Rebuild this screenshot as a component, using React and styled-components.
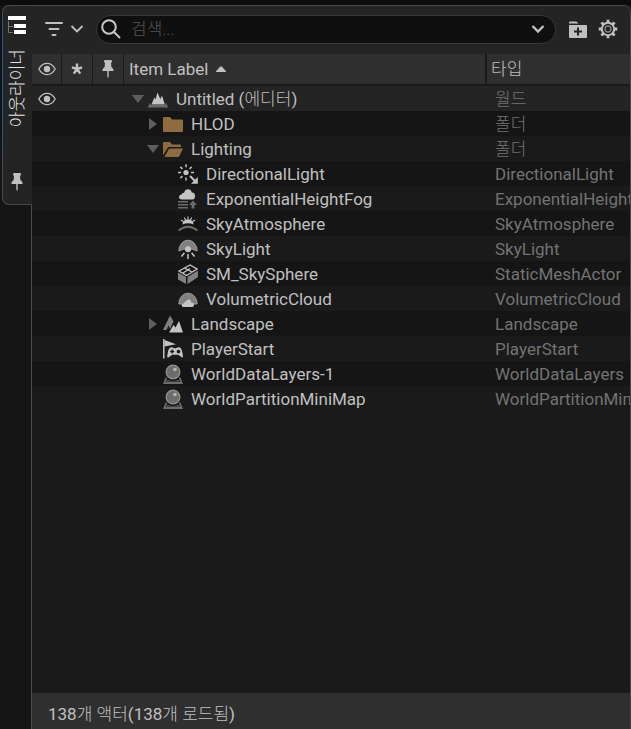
import React, { useState } from "react";
import styled, { createGlobalStyle } from "styled-components";

const GlobalStyle = createGlobalStyle`
  * { box-sizing: border-box; }
  body {
    margin: 0;
    background: #141414;
    color: #c0c0c0;
    font-family: Roboto, "Noto Sans CJK KR", sans-serif;
    font-size: 17px;
    line-height: 24px;
  }
  button, input {
    font: inherit;
    color: inherit;
    border: 0;
    padding: 0;
    margin: 0;
    background: none;
  }
  svg { display: block; flex: none; }
`;

const Page = styled.div`
  display: flex;
  min-height: 100vh;
  padding-top: 5px;
  background: linear-gradient(#0c0c0c, #0c0c0c) top / 100% 5px no-repeat #141414;
`;

const Sidebar = styled.nav`
  flex: none;
  display: flex;
  flex-direction: column;
  width: 32px;
  padding-left: 2px;
`;

const SidebarRest = styled.div`
  flex: 1;
  border-right: 1px solid #4c4c4c;
`;

const Tab = styled.button`
  display: flex;
  flex-direction: column;
  align-items: center;
  width: 100%;
  height: 200px;
  padding: 10px 2px 12px 0;
  border: 1px solid transparent;
  border-right: 0;
  border-radius: 7px 0 0 7px;
  background:
    linear-gradient(#242424, #242424) padding-box,
    linear-gradient(#484848, #1d5d96 12%, #1f5f96 50%, #484848 90%) border-box;
  color: #e4e4e4;
`;

const TabLabel = styled.span`
  writing-mode: vertical-rl;
  text-orientation: sideways;
  transform: rotate(180deg);
  margin-top: 14px;
  margin-bottom: auto;
  font-weight: 300;
`;

const Panel = styled.main`
  flex: 1;
  min-width: 0;
  display: flex;
  flex-direction: column;
  background: #1a1a1a;
  border: 1px solid #484848;
  border-bottom: 0;
  border-left: 0;
  border-top-right-radius: 7px;
  overflow: hidden;
`;

const Toolbar = styled.div`
  display: flex;
  align-items: center;
  height: 48px;
  padding: 0 12px 2px 13px;
  background: #242424;
`;

const IconButton = styled.button`
  display: flex;
  align-items: center;
  gap: 7px;
  margin-left: ${(p) => p.$gap || 0}px;
`;

const SearchBox = styled.label`
  flex: 1;
  min-width: 0;
  display: flex;
  align-items: center;
  gap: 10px;
  height: 29px;
  margin: 0 13px 0 12px;
  padding: 0 10px 0 4px;
  background: #0f0f0f;
  border: 1px solid #383838;
  border-radius: 15px;
`;

const SearchInput = styled.input`
  flex: 1;
  min-width: 0;
  outline: 0;
  font-weight: 300;
  &::placeholder { color: #565656; opacity: 1; }
`;

const Body = styled.section`
  flex: 1;
`;

const Table = styled.table`
  width: 100%;
  table-layout: fixed;
  border-collapse: separate;
  border-spacing: 0;
`;

const Col = styled.col`
  width: ${(p) => p.$width}px;
`;

const HeadRow = styled.tr`
  height: 32px;
`;

const HeadCell = styled.th`
  height: 32px;
  padding: 0 0 0 ${(p) => p.$pad || 0}px;
  background: #2f2f2f;
  border-right: ${(p) => p.$line || 0}px solid #1a1a1a;
  border-bottom: 2px solid #1a1a1a;
  text-align: left;
  font-weight: 400;
`;

const HeadContent = styled.div`
  display: flex;
  align-items: center;
  gap: 8px;
  justify-content: ${(p) => (p.$center ? "center" : "flex-start")};
`;

const Row = styled.tr`
  height: 25px;
  background: ${(p) => (p.$root ? "#242424" : "#1a1a1a")};
  &:nth-child(even) { background: #151515; }
`;

const Cell = styled.td`
  height: 25px;
  padding: 0;
  white-space: nowrap;
  overflow: hidden;
`;

const TypeCell = styled(Cell)`
  padding-left: 8px;
  color: #737373;
`;

const Item = styled.div`
  display: flex;
  align-items: center;
  padding-left: ${(p) => 6 + p.$level * 15}px;
`;

const Toggle = styled.button`
  display: flex;
  align-items: center;
  justify-content: center;
  width: 16px;
  height: 24px;
  margin-right: 2px;
  color: #5e5e5e;
`;

const ToggleSpace = styled.span`
  width: 18px;
`;

const ItemText = styled.span`
  margin-left: 8px;
`;

const Hangul = styled.span`
  font-weight: 300;
`;

const EyeButton = styled(IconButton)`
  width: 100%;
  justify-content: center;
  padding-right: 1px;
`;

const Footer = styled.footer`
  height: 36px;
  padding: 9px 16px 0;
  background: #2f2f2f;
`;

const Text = ({ children }) =>
  children
    .split(/([가-힣]+)/)
    .map((part, i) => (i % 2 ? <Hangul key={i}>{part}</Hangul> : part));

const Eye = () => (
  <svg width="18" height="14" viewBox="0 0 18 14" fill="none" stroke="#c0c0c0" strokeWidth="1.3">
    <path d="M.8 7Q4 1.4 9 1.4T17.2 7Q14 12.6 9 12.6T.8 7Z" />
    <circle cx="9" cy="7" r="3.2" fill="#c0c0c0" stroke="none" />
  </svg>
);

const Pin = () => (
  <svg width="12" height="20" viewBox="0 0 12 20" fill="#c0c0c0">
    <path d="M2 2.200Q2 1 3.200 1h5.600Q10 1 10 2.200T9 4l.4 4q2.300 1.300 2.300 4H.3Q.3 9.300 2.600 8L3 4Q2 3.500 2 2.200Z" />
    <path d="M5.300 12h1.400v5L6 19.500 5.300 17Z" />
  </svg>
);

const Star = () => (
  <svg width="12" height="12" viewBox="0 0 12 12" stroke="#c0c0c0" strokeWidth="2.4">
    <path d="M6 6V.5M6 6 .9 4.400M6 6l5.100-1.600M6 6l-3.200 4.600M6 6l3.200 4.600" />
  </svg>
);

const Chevron = ({ bold }) => (
  <svg width="14" height="10" viewBox="0 0 14 10" fill="none" stroke="#c0c0c0" strokeWidth={bold ? 2.4 : 1.8}>
    <path d="m1.500 2 5.500 5.500L12.500 2" />
  </svg>
);

const TreeLogo = () => (
  <svg width="18" height="19" viewBox="0 0 18 19">
    <path d="M0 0h18v4H0ZM6 8h12v4H6ZM6 14h12v4H6Z" fill="#fff" />
    <path d="M.5 5v11.500H5M.5 10.500H5" fill="none" stroke="#747474" />
  </svg>
);

const FilterIcon = () => (
  <svg width="18" height="16" viewBox="0 0 18 16" stroke="#c0c0c0" strokeWidth="2" strokeLinecap="round">
    <path d="M1 2h16M4.500 8h9M7.500 14h3" />
  </svg>
);

const SearchIcon = () => (
  <svg width="20" height="20" viewBox="0 0 20 20" fill="none" stroke="#c8c8c8" strokeWidth="2">
    <circle cx="8" cy="8" r="6.800" />
    <path d="m13 13 6 6" />
  </svg>
);

const AddFolder = () => (
  <svg width="18" height="17" viewBox="0 0 18 17">
    <path d="M0 2.500V1.500Q0 .5 1 .5h6.500l2 2ZM0 4h17q1 0 1 1v11q0 1-1 1H1q-1 0-1-1Z" fill="#c0c0c0" />
    <path d="M9 6.500v8M5 10.500h8" stroke="#242424" strokeWidth="2" />
  </svg>
);

const Gear = () => (
  <svg width="20" height="20" viewBox="0 0 20 20" fill="none" stroke="#c0c0c0">
    <circle cx="10" cy="10" r="6.200" strokeWidth="2" />
    <circle cx="10" cy="10" r="3" stroke="#808080" strokeWidth="1.400" />
    <path
      d="M10 .7v3M10 16.300v3M.7 10h3M16.300 10h3M3.400 3.400l2.200 2.200M14.400 14.400l2.200 2.200M3.400 16.600l2.200-2.200M14.400 5.600l2.200-2.200"
      strokeWidth="2.800"
    />
  </svg>
);

const SortArrow = () => (
  <svg width="10" height="6" viewBox="0 0 10 6">
    <path d="M0 5.200 4 .7q1-1 2 0l4 4.500v.8H0Z" fill="#c0c0c0" />
  </svg>
);

const Triangle = ({ open }) => (
  <svg width="12" height="12" viewBox="0 0 12 12" fill="currentColor">
    <path d={open ? "M0 2h12L6 10Z" : "M2 0v12l8-6Z"} />
  </svg>
);

const L = "#c4c4c4";
const D = "#6c6c6c";
const M = "#808080";

const icons = {
  world: (
    <>
      <path d="M3 14.500H1.500L0 18.500h20l-1.500-4H17l.5 1.500h-15Z" fill={D} />
      <path d="M3.500 15.500 6.300 8.500l1.200 2L9.500 3.500l2.800 6.500 1.700-3.500L16.800 15.500Z" fill={L} />
    </>
  ),
  folder: <path d="M0 4q0-1 1-1h6l2 2.500h10q1 0 1 1V17q0 1-1 1H1q-1 0-1-1Z" fill="#8e6c40" />,
  folderOpen: (
    <>
      <path d="M0 4q0-1 1-1h6l2 2.500h8q1 0 1 1V8H6.500q-1.500 0-2 1L0 16.500Z" fill="#8e6c40" />
      <path d="M7 9.500h13L16.500 17q-.5 1-1.500 1H1.500l4-7.500q.5-1 1.500-1Z" fill="#8e6c40" />
    </>
  ),
  sun: (
    <>
      <circle cx="8" cy="8.500" r="2.600" fill={L} />
      <path d="M8 .3v3M8 13.500v3M0 8.500h3M13 8.500h3M2.400 2.900l2 2M13.600 2.900l-2 2M2.400 14.100l2-2" stroke={L} strokeWidth="1.500" />
      <path d="m12 12 5 5" stroke={L} strokeWidth="2" />
      <path d="M19.800 13v6.800H13Z" fill={L} />
    </>
  ),
  fog: (
    <>
      <path d="M4 10.500q-3 0-3-2.500Q1 5.800 3.500 5.500 4 3.600 6 3.700 7 .3 10 .3q3.200 0 3.600 3.200 3.400-.3 3.400 3.500T14 10.500Z" fill={L} />
      <path d="M0 12.700h10M0 15.700h10M0 18.700h10" stroke={D} strokeWidth="1.600" />
      <path d="m15 11.500 4 4.500h-2.500v3.500h-3V16H11Z" fill={D} />
    </>
  ),
  atmosphere: (
    <>
      <path d="M4.500 10.500q5.500-2.500 11 0-.4-5-5.500-5t-5.500 5Z" fill={L} />
      <path d="M10 2.500v4M6.300 3.500l1.500 3M13.700 3.500l-1.500 3M3 6l3 2M17 6l-3 2" stroke={L} strokeWidth="1.100" />
      <path d="M.5 16.500Q10 9 19.500 16.500" stroke={D} strokeWidth="1.900" fill="none" />
    </>
  ),
  skylight: (
    <>
      <path d="M.8 12A9.200 10.800 0 1 1 19.200 12Q14.500 9.700 10 9.700T.8 12Z" fill={M} stroke="#9a9a9a" />
      <circle cx="10" cy="10.200" r="3" fill={L} />
      <path d="M10 15v5M6.400 13.800 3.500 17.500M13.600 13.800l2.900 3.700" stroke={L} strokeWidth="1.500" />
    </>
  ),
  mesh: (
    <>
      <path d="M0 8.500 8 13v7l-8-4.500ZM9.500 13 20 6.500V13L9.500 20Z" fill={M} />
      <path d="M1 7 12 1l7 4-10.500 6.500ZM6.500 4 14 8M5 9l7-4.500" fill="none" stroke={L} strokeWidth="1.400" />
    </>
  ),
  cloud: (
    <>
      <path d="M.8 15A9.200 10.800 0 1 1 19.200 15Z" fill={M} stroke="#9a9a9a" />
      <path d="M5 18q-1.500-.3-1.300-2 .3-1.700 2-1.500Q6.500 12.500 8 12.500q1-2.600 3.300-2 2.200.7 1.700 3 2.800-.3 3 2 .2 2.500-2 2.500Z" fill={L} />
    </>
  ),
  landscape: (
    <>
      <path d="M0 16 7 1.500l3.500 6L7 15l-1.500-3.500L3.500 16Z" fill={M} />
      <path d="M6 18.500 10.500 11l2 2.500L16 7l4 11.500Z" fill={L} />
    </>
  ),
  player: (
    <>
      <path d="M.8 0v19.500" stroke={L} strokeWidth="1.500" />
      <path d="M1.500 1 13 5.200 1.500 7.500Z" fill={L} />
      <path
        fillRule="evenodd"
        d="M7.500 8.500q2-.5 3.500.8h2q1.700-1.300 3.700-.8Q19 9 20 17.500q0 1.300-1.200 1-1.800-2.300-4-2.800H9.500q-1.600.5-4 2.800-1.500.3-1.300-1Q5 9.200 7.500 8.500Zm1 2v1.300H7.200v1.400h1.300v1.300h1.400v-1.300h1.300v-1.400H9.900v-1.300ZM15.500 10.700a1.800 1.800 0 1 0 .01 0Z"
        fill={L}
      />
    </>
  ),
  orb: (
    <>
      <path d="M2.500 13.500 0 20h20l-2.500-6.500h-1.800L17.300 18H2.700l1.600-4.500Z" fill={D} />
      <path d="M4 16q6 2 12 0l.5 1.500h-13Z" fill={D} />
      <circle cx="10" cy="8" r="6.800" fill={D} stroke="#8e8e8e" strokeWidth="1.400" />
      <circle cx="12" cy="5.500" r="1.800" fill="#b4b4b4" />
    </>
  ),
};

const ItemIcon = ({ kind }) => (
  <svg width="20" height="20" viewBox="0 0 20 20">{icons[kind]}</svg>
);

const rows = [
  { level: 0, label: "Untitled (에디터)", type: "월드", icon: "world", toggle: "open" },
  { level: 1, label: "HLOD", type: "폴더", icon: "folder", toggle: "closed" },
  { level: 1, label: "Lighting", type: "폴더", icon: "folderOpen", toggle: "open" },
  { level: 2, label: "DirectionalLight", type: "DirectionalLight", icon: "sun" },
  { level: 2, label: "ExponentialHeightFog", type: "ExponentialHeightFog", icon: "fog" },
  { level: 2, label: "SkyAtmosphere", type: "SkyAtmosphere", icon: "atmosphere" },
  { level: 2, label: "SkyLight", type: "SkyLight", icon: "skylight" },
  { level: 2, label: "SM_SkySphere", type: "StaticMeshActor", icon: "mesh" },
  { level: 2, label: "VolumetricCloud", type: "VolumetricCloud", icon: "cloud" },
  { level: 1, label: "Landscape", type: "Landscape", icon: "landscape", toggle: "closed" },
  { level: 1, label: "PlayerStart", type: "PlayerStart", icon: "player" },
  { level: 1, label: "WorldDataLayers-1", type: "WorldDataLayers", icon: "orb" },
  { level: 1, label: "WorldPartitionMiniMap", type: "WorldPartitionMiniMap", icon: "orb" },
];

export default function App() {
  const [query, setQuery] = useState("");
  return (
    <>
      <GlobalStyle />
      <Page>
        <Sidebar>
          <Tab type="button">
            <TreeLogo />
            <TabLabel>아웃라이너</TabLabel>
            <Pin />
          </Tab>
          <SidebarRest />
        </Sidebar>
        <Panel>
          <Toolbar>
            <IconButton type="button" aria-label="Filter">
              <FilterIcon />
              <Chevron />
            </IconButton>
            <SearchBox>
              <SearchIcon />
              <SearchInput
                type="text"
                aria-label="검색"
                placeholder="검색..."
                value={query}
                onChange={(e) => setQuery(e.target.value)}
              />
              <IconButton type="button" aria-label="Search history">
                <Chevron bold />
              </IconButton>
            </SearchBox>
            <IconButton type="button" aria-label="New folder">
              <AddFolder />
            </IconButton>
            <IconButton type="button" aria-label="Settings" $gap={11}>
              <Gear />
            </IconButton>
          </Toolbar>
          <Body>
            <Table>
              <colgroup>
                <Col $width={30} />
                <Col $width={31} />
                <Col $width={31} />
                <col />
                <Col $width={143} />
              </colgroup>
              <thead>
                <HeadRow>
                  <HeadCell $line={1} aria-label="Visibility"><HeadContent $center><Eye /></HeadContent></HeadCell>
                  <HeadCell $line={1} aria-label="Unsaved"><HeadContent $center><Star /></HeadContent></HeadCell>
                  <HeadCell $line={1} aria-label="Pinned"><HeadContent $center><Pin /></HeadContent></HeadCell>
                  <HeadCell $line={2} $pad={5}><HeadContent>Item Label<SortArrow /></HeadContent></HeadCell>
                  <HeadCell $pad={4}><Text>타입</Text></HeadCell>
                </HeadRow>
              </thead>
              <tbody>
                {rows.map((row) => (
                  <Row key={row.label} $root={row.level === 0}>
                    <Cell>
                      {row.level === 0 && (
                        <EyeButton type="button" aria-label="Toggle visibility"><Eye /></EyeButton>
                      )}
                    </Cell>
                    <Cell />
                    <Cell />
                    <Cell>
                      <Item $level={row.level}>
                        {row.toggle ? (
                          <Toggle type="button" aria-label={`Expand ${row.label}`}>
                            <Triangle open={row.toggle === "open"} />
                          </Toggle>
                        ) : (
                          <ToggleSpace />
                        )}
                        <ItemIcon kind={row.icon} />
                        <ItemText><Text>{row.label}</Text></ItemText>
                      </Item>
                    </Cell>
                    <TypeCell><Text>{row.type}</Text></TypeCell>
                  </Row>
                ))}
              </tbody>
            </Table>
          </Body>
          <Footer><Text>138개 액터(138개 로드됨)</Text></Footer>
        </Panel>
      </Page>
    </>
  );
}
